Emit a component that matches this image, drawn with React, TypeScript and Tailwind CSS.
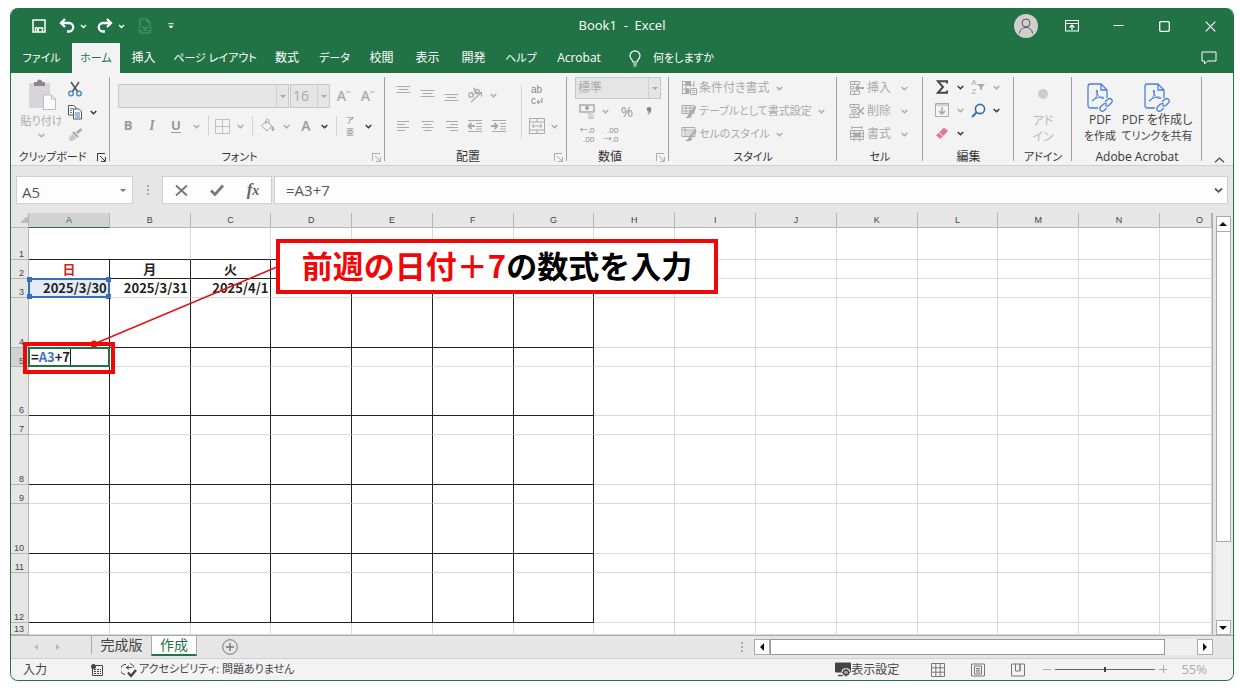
import { type ReactNode } from "react";

interface Tab {
  label: string;
  width: string;
}

const tabs: Tab[] = [
  { label: "ファイル", width: "w-[61px] text-[11px]" },
  { label: "ホーム", width: "w-12 text-[11px]" },
  { label: "挿入", width: "w-[47px]" },
  { label: "ページ レイアウト", width: "w-24 text-[11px]" },
  { label: "数式", width: "w-12" },
  { label: "データ", width: "w-[47px] text-[11px]" },
  { label: "校閲", width: "w-[47px]" },
  { label: "表示", width: "w-[45px]" },
  { label: "開発", width: "w-[47px]" },
  { label: "ヘルプ", width: "w-12 text-[11px]" },
  { label: "Acrobat", width: "w-[68px]" },
];

const columns = "ABCDEFGHIJKLMNO".split("");

const rows: { n: number; height: string }[] = [
  { n: 1, height: "h-8" },
  { n: 2, height: "h-[19px]" },
  { n: 3, height: "h-[19px]" },
  { n: 4, height: "h-[50px]" },
  { n: 5, height: "h-[19px]" },
  { n: 6, height: "h-[49px]" },
  { n: 7, height: "h-[19px]" },
  { n: 8, height: "h-[50px]" },
  { n: 9, height: "h-[19px]" },
  { n: 10, height: "h-[50px]" },
  { n: 11, height: "h-[19px]" },
  { n: 12, height: "h-[50px]" },
  { n: 13, height: "h-3" },
];

const values: Record<string, string> = {
  A2: "日",
  B2: "月",
  C2: "火",
  A3: "2025/3/30",
  B3: "2025/3/31",
  C3: "2025/4/1",
};

const Chevron = ({ dark = false }: { dark?: boolean }) => (
  <svg
    className={`h-[5px] w-[7px] shrink-0 ${dark ? "text-[#333]" : "text-[#aaa]"}`}
    viewBox="0 0 7 5"
    fill="none"
    stroke="currentColor"
    strokeWidth="1.4"
  >
    <path d="M.7 1l2.8 2.8L6.3 1" />
  </svg>
);

const Icon = ({
  size = "size-4",
  box = "0 0 16 16",
  children,
}: {
  size?: string;
  box?: string;
  children: ReactNode;
}) => (
  <svg className={`shrink-0 ${size}`} viewBox={box} fill="none" stroke="currentColor">
    {children}
  </svg>
);

// A ribbon button: fixed-width slot with its content centred
const Btn = ({
  label,
  className = "w-6",
  children,
}: {
  label: string;
  className?: string;
  children: ReactNode;
}) => (
  <button
    type="button"
    aria-label={label}
    className={`flex h-5 shrink-0 items-center justify-center ${className}`}
  >
    {children}
  </button>
);

const Divider = ({ className = "h-5" }: { className?: string }) => (
  <span className="flex w-2 shrink-0 justify-center">
    <span className={`w-px bg-[#d4d4d4] ${className}`} />
  </span>
);

const Group = ({
  title,
  width,
  launcher,
  children,
}: {
  title: string;
  width: string;
  launcher?: "dark" | "light";
  children: ReactNode;
}) => (
  <section
    aria-label={title}
    className={`relative flex shrink-0 flex-col after:absolute after:top-0 after:right-0 after:bottom-1 after:w-px after:bg-[#a0a0a0] ${width}`}
  >
    <div className="flex-1 pb-1">{children}</div>
    <div
      className={`flex h-4 items-center justify-center whitespace-nowrap text-[#333] ${
        launcher ? "pr-4" : ""
      } ${/^[ァ-ヶー]+$/.test(title) ? "text-[11px]" : ""}`}
    >
      {title}
    </div>
    {launcher && (
      <button
        type="button"
        aria-label={`${title}の設定`}
        className={`absolute right-1 bottom-[3px] ${
          launcher === "dark" ? "text-[#333]" : "text-[#aaa]"
        }`}
      >
        <Icon size="size-[9px]" box="0 0 9 9">
          <path d="M.5 8V.5H8M3 3l5 5M8.400 4v4.400H4" />
        </Icon>
      </button>
    )}
  </section>
);

const DropBox = ({
  label,
  value,
  className,
}: {
  label: string;
  value: string;
  className: string;
}) => (
  <div className={`relative flex border border-[#c6c6c6] bg-[#e5e5e5] ${className}`}>
    <select
      aria-label={label}
      disabled
      className="w-full appearance-none pl-0.5 text-[#aaa] opacity-100"
    >
      <option>{value}</option>
    </select>
    <span className="pointer-events-none flex w-3 shrink-0 items-center justify-center border-l border-[#cfcfcf]">
      <span className="border-x-[3px] border-t-[3px] border-x-transparent border-t-[#aaa]" />
    </span>
  </div>
);

const Lines = ({ rows: widths, start }: { rows: number[]; start?: boolean | "end" }) => (
  <Icon size="h-[10px] w-[15px]" box="0 0 15 10">
    {widths.map((w, i) => {
      const x = start === "end" ? 14 - w : start ? 1 : (15 - w) / 2;
      return <path key={i} d={`M${x} ${i * 3 + 0.5}h${w}`} />;
    })}
  </Icon>
);

const TitleBar = () => (
  <div className="grid h-[35px] grid-cols-[1fr_auto_1fr] items-center pt-px">
    <div className="flex items-center pl-5">
      <Btn label="上書き保存" className="w-4">
        <Icon size="size-[14px]" box="0 0 14 14">
          <path d="M1 1h12v12H1z" strokeWidth="1.500" />
          <path d="M3.500 13V9h7v4" strokeWidth="1.500" />
          <path d="M5 10h2v3H5z" fill="currentColor" stroke="none" />
        </Icon>
      </Btn>
      <Btn label="元に戻す" className="ml-2 w-6">
        <Icon size="size-4">
          <path d="M6 1L2 5l4 4M2 5h8a4 4 0 010 8.500H8" strokeWidth="2.300" />
        </Icon>
      </Btn>
      <Btn label="元に戻すの一覧" className="w-2">
        <Icon size="h-[5px] w-[7px]" box="0 0 7 5">
          <path d="M1 1l2.500 2.500L6 1" strokeWidth="1.300" />
        </Icon>
      </Btn>
      <Btn label="やり直し" className="ml-1.5 w-6">
        <Icon size="size-4">
          <path d="M10 1l4 4-4 4M14 5H6a4 4 0 000 8.500h2" strokeWidth="2.300" />
        </Icon>
      </Btn>
      <Btn label="やり直しの一覧" className="w-2">
        <Icon size="h-[5px] w-[7px]" box="0 0 7 5">
          <path d="M1 1l2.500 2.500L6 1" strokeWidth="1.300" />
        </Icon>
      </Btn>
      <Btn label="PDF" className="ml-2 w-6 text-[#4f9a6d]">
        <Icon size="size-4">
          <path d="M3 8V1h7l3 3v4M10 1v3h3M3 13v2h10v-2" />
          <path d="M2 9h12v3.500H2z" strokeDasharray="2 1" />
          <path d="M6 10.700h4" />
        </Icon>
      </Btn>
      <Btn label="クイック アクセスのカスタマイズ" className="ml-1 w-5">
        <Icon size="size-[6px]" box="0 0 6 6">
          <path d="M.5.700h5" />
          <path d="M.5 2.800h5L3 5.600z" fill="currentColor" stroke="none" />
        </Icon>
      </Btn>
    </div>
    <h1 className="text-[13px] whitespace-pre">{"Book1  -  Excel"}</h1>
    <div className="flex items-center justify-end gap-[22px] pr-[11px]">
      <button
        type="button"
        aria-label="アカウント"
        className="flex size-6 items-center justify-center rounded-full bg-[#d0cece] text-[#555]"
      >
        <Icon size="size-[18px]" box="0 0 18 18">
          <circle cx="9" cy="6" r="4" />
          <path d="M2.500 16.500c.5-8 12.500-8 13 0" />
        </Icon>
      </button>
      <Btn label="リボンの表示オプション">
        <Icon size="h-3 w-[14px]" box="0 0 14 12">
          <path d="M.5.500h13v10.500H.5zM.5 3.500h13M7 10V5.500M4.500 7.500L7 5l2.500 2.500" strokeWidth="1.200" />
        </Icon>
      </Btn>
      <Btn label="最小化">
        <Icon size="h-3 w-[11px]" box="0 0 11 12">
          <path d="M.5 5.500h10" />
        </Icon>
      </Btn>
      <Btn label="最大化">
        <Icon size="size-[11px]" box="0 0 11 11">
          <rect x=".7" y=".7" width="9.600" height="9.600" rx="1.200" strokeWidth="1.300" />
        </Icon>
      </Btn>
      <Btn label="閉じる">
        <Icon size="size-[11px]" box="0 0 11 11">
          <path d="M.7.700l9.600 9.600M10.300.700L.7 10.300" strokeWidth="1.200" />
        </Icon>
      </Btn>
    </div>
  </div>
);

const TabBar = () => (
  <nav className="flex h-[30px] items-stretch">
    {tabs.map(({ label, width }) => (
      <a
        key={label}
        href="#"
        aria-current={label === "ホーム" ? "page" : undefined}
        className={`flex items-center justify-center whitespace-nowrap ${width} ${
          label === "ホーム" ? "bg-[#f3f3f3] text-[#217346]" : ""
        }`}
      >
        {label}
      </a>
    ))}
    <button type="button" className="flex items-center gap-3 pl-4 text-[11px]">
      <Icon size="h-[17px] w-3" box="0 0 12 17">
        <path d="M4 12c0-2-3-3-3-6.200a5 5 0 0110 0C11 9 8 10 8 12zM4 14h4M4.500 16h3" strokeWidth="1.200" />
      </Icon>
      何をしますか
    </button>
    <button type="button" aria-label="コメント" className="mr-4 ml-auto">
      <Icon size="h-[14px] w-4" box="0 0 16 14">
        <path d="M1 1h14v9H6.500l-3 3v-3H1z" />
      </Icon>
    </button>
  </nav>
);

const AcrobatIcon = () => (
  <Icon size="h-[30px] w-[28px]" box="0 0 28 30">
    <g stroke="#4a80d8" strokeWidth="1.300">
      <path d="M12 26H4.500A2.500 2.500 0 012 23.500v-19A2.500 2.500 0 014.500 2H15l6 6v8M15 2v6h6" />
      <path d="M6.500 19c2-.5 5.500-6 5-10-.3-1.500-1.500-1-1.300 0 .5 4 4 7.500 7 7.500 1.500-.3.500-1.500-1-1.500-3 0-7 1.200-9.500 3-.8.800-.8 1.200-.2 1z" strokeWidth="1" />
      <path d="M19 20l2.500-2.500c3-2.500 6 .8 4 3.300l-2.500 2.500c-1.300 1.300-3 1-3.800 0M21 22.500c-1-1.300-3-1-4 0l-2.500 2.500c-2 2.500 1 5.500 3.700 3.500l2.500-2.500" />
    </g>
  </Icon>
);

const styleItems: { label: string; text?: string; icon: ReactNode }[] = [
  {
    label: "条件付き書式",
    icon: (
      <Icon>
        <path d="M1.500 1v13M1 1.500h9M5 1v12M1 5h12M1 9h7M9.500 1v6M13 1v6M1 13.500h7" />
        <path d="M5 1.500h4V5H5zM5 9h3v4H5z" fill="currentColor" />
        <path d="M9.500 8.500h6v6h-6zM11 10.500h3M11 12.500h3" />
      </Icon>
    ),
  },
  {
    label: "テーブルとして書式設定",
    text: "text-[11px]",
    icon: (
      <Icon>
        <path d="M1 2.500h12v8H1zM1 5h12M1 8h10M5 2.500v8M9 2.500v8" />
        <path d="M15 3.500L8 10.500M14.500 5L9.500 12" strokeWidth="1.500" />
        <path d="M5 14.500c2.500 0 2-3.500 4-3.500l1.300 1.500c0 2-3 2.800-5.300 2z" fill="currentColor" />
      </Icon>
    ),
  },
  {
    label: "セルのスタイル",
    text: "text-[11px]",
    icon: (
      <Icon>
        <path d="M1 1.500h13v9H1zM1 4h13M4 1.500v9" />
        <path d="M5 5h8v5H5z" fill="#ddd6dd" stroke="none" />
        <path d="M15 4.500L9 11" strokeWidth="2" />
        <path d="M5 14.500c3 0 2-3.500 4.500-3.500l1.300 1.500c0 2-3.500 2.800-5.800 2z" fill="currentColor" />
      </Icon>
    ),
  },
];

const cellItems: { label: string; icon: ReactNode }[] = [
  {
    label: "挿入",
    icon: (
      <Icon>
        <path d="M1.500 1.500h9v3h-9zM5.500 1.500v3M1.500 11h9v3.500h-9zM5.500 11v3.500" />
        <path d="M7 8h8M9.500 5.500L7 8l2.500 2.500" strokeWidth="1.800" />
        <path d="M1.500 6.500h3V9h-3z" />
      </Icon>
    ),
  },
  {
    label: "削除",
    icon: (
      <Icon>
        <path d="M1 1.500h9v3H1zM5 1.500v3M1 11h9v3.500H1zM5 11v3.500M3 6.500h4V9H3z" />
        <path d="M8 4.500l7 7M15 4.500l-7 7" strokeWidth="1.600" />
      </Icon>
    ),
  },
  {
    label: "書式",
    icon: (
      <Icon>
        <path d="M3 1.500h10M3 0v3M13 0v3M1.500 4.500h13v9h-13zM1.500 7.500h13M1.500 10.500h13M5 4.500v11M11 4.500v11" />
        <path d="M5 7h6v4H5z" fill="currentColor" />
      </Icon>
    ),
  },
];

const Ribbon = () => (
  <div className="flex items-stretch border-b border-[#cfcfcf] bg-[#f3f3f3] pt-1 text-[#aaa]">
    <Group title="クリップボード" width="w-[99px]" launcher="dark">
      <div className="flex pt-0.5 pl-2">
        <button type="button" className="flex w-[45px] flex-col items-center">
          <Icon size="h-8 w-[30px]" box="0 0 30 32">
            <path d="M2 4h21v25H2z" fill="#d8d4d8" stroke="none" />
            <path d="M7 3h3a2.500 2.500 0 015 0h3v4H7z" fill="#888" stroke="none" />
            <path d="M16.500 16h8l4 4v10.500h-12z" fill="#fafafa" stroke="#bbb" />
            <path d="M24.500 16v4h4" stroke="#bbb" />
          </Icon>
          <span className="text-[11px] leading-5 whitespace-nowrap">貼り付け</span>
          <span className="py-0.5">
            <Chevron />
          </span>
        </button>
        <div className="flex flex-col gap-[3px] pl-1">
          <Btn label="切り取り" className="w-3.5">
            <Icon>
              <path d="M4 1l6.500 9.500M12 1L5.500 10.500" stroke="#555" strokeWidth="1.600" />
              <circle cx="4" cy="12.500" r="2.300" stroke="#3f7fbf" strokeWidth="1.300" />
              <circle cx="12" cy="12.500" r="2.300" stroke="#3f7fbf" strokeWidth="1.300" />
            </Icon>
          </Btn>
          <span className="flex items-center gap-2">
            <Btn label="コピー" className="w-3.5">
              <Icon>
                <path d="M1.500 1.500h5l2.500 2V11H1.500z" stroke="#555" fill="#fff" />
                <path d="M6.500 5h5l3 2.500V15h-8z" stroke="#555" fill="#fff" />
                <path d="M3 4.500h3M3 6.500h2M3 8.500h2M8 9h5M8 11h5M8 13h5" stroke="#3f7fbf" />
              </Icon>
            </Btn>
            <Chevron dark />
          </span>
          <Btn label="書式のコピー/貼り付け" className="w-3.5">
            <Icon>
              <path d="M14.500 2L10 6" strokeWidth="2.600" />
              <path d="M6 5l5 5" strokeWidth="2.400" />
              <path d="M5.500 7l4 4c-2 2-4 3-6 3.500L1.500 11z" fill="#ccc6cc" stroke="none" />
            </Icon>
          </Btn>
        </div>
      </div>
    </Group>

    <Group title="フォント" width="w-[275px]" launcher="light">
      <div className="flex items-center pt-[7px] pl-2">
        <DropBox label="フォント" value="" className="h-6 w-[171px]" />
        <DropBox label="フォント サイズ" value="16" className="ml-px h-6 w-10 text-sm" />
        <Btn label="フォント サイズの拡大" className="ml-0.5 w-6">
          <span className="text-sm font-semibold">A</span>
          <Icon size="mb-2 h-1 w-[5px]" box="0 0 5 4">
            <path d="M.5 3l2-2 2 2" />
          </Icon>
        </Btn>
        <Btn label="フォント サイズの縮小">
          <span className="text-sm font-semibold">A</span>
          <Icon size="mb-2 h-1 w-[5px]" box="0 0 5 4">
            <path d="M.5 1l2 2 2-2" />
          </Icon>
        </Btn>
      </div>
      <div className="flex items-center pt-2 pl-1.5">
        <Btn label="太字">
          <b className="text-[13px] text-[#999]">B</b>
        </Btn>
        <Btn label="斜体">
          <i className="font-['Liberation_Serif',serif] text-sm font-bold text-[#999]">I</i>
        </Btn>
        <Btn label="下線">
          <b className="text-[13px] text-[#999] underline underline-offset-2">U</b>
        </Btn>
        <Btn label="下線の種類" className="w-4">
          <Chevron />
        </Btn>
        <Divider />
        <Btn label="罫線" className="w-5">
          <Icon size="size-[15px]" box="0 0 15 15">
            <path d="M.5.500h14v14H.5zM7.500 0v15M0 7.500h15" stroke="#c4bcc4" />
          </Icon>
        </Btn>
        <Btn label="罫線の種類" className="w-4">
          <Chevron />
        </Btn>
        <Divider />
        <Btn label="塗りつぶしの色">
          <Icon>
            <path d="M6 3l6 5-5 5-5.500-5zM6 6V2.500c0-2 3-2 3 0V5" />
            <path d="M12.500 8.500c2 2.500 2 4 .5 4s-1.500-1.500-.5-4z" fill="currentColor" />
          </Icon>
        </Btn>
        <Btn label="塗りつぶしの色の一覧" className="w-3">
          <Chevron />
        </Btn>
        <Btn label="フォントの色" className="w-7">
          <span className="text-sm font-semibold text-[#999]">A</span>
        </Btn>
        <Btn label="フォントの色の一覧" className="mr-1 w-2">
          <Chevron dark />
        </Btn>
        <Divider />
        <Btn label="ふりがな" className="w-5">
          <span className="flex flex-col items-center text-[8px] leading-3 text-[#888]">
            <span>ア</span>
            <span>亜</span>
          </span>
        </Btn>
        <Btn label="ふりがなの設定" className="w-4">
          <Chevron dark />
        </Btn>
      </div>
    </Group>

    <Group title="配置" width="w-[182px]" launcher="light">
      <div className="flex pt-2 pl-1.5">
        <div className="flex w-[126px] flex-col gap-[11px]">
          <div className="flex items-center">
            <Btn label="上揃え" className="w-6 pb-2">
              <Lines rows={[14, 10, 14]} />
            </Btn>
            <Btn label="上下中央揃え">
              <Lines rows={[14, 10, 14]} />
            </Btn>
            <Btn label="下揃え" className="w-6 pt-2">
              <Lines rows={[14, 10, 14]} />
            </Btn>
            <Btn label="方向">
              <Icon>
                <path d="M4 15L14 6M10.500 5.500L14.500 5.500V9.500" strokeWidth="1.200" />
                <circle cx="4" cy="8" r="2.200" strokeWidth="1.300" />
                <path d="M4.500 5.200l2.300 3.600M6.500 1l4.300 6" strokeWidth="1.300" />
                <circle cx="10" cy="4.500" r="2.200" strokeWidth="1.300" />
              </Icon>
            </Btn>
            <Btn label="方向の一覧" className="w-3">
              <Chevron />
            </Btn>
          </div>
          <div className="flex items-center">
            <Btn label="左揃え">
              <Lines rows={[12, 8, 12, 8]} start />
            </Btn>
            <Btn label="中央揃え">
              <Lines rows={[12, 8, 12, 8]} />
            </Btn>
            <Btn label="右揃え">
              <Lines rows={[12, 8, 12, 8]} start="end" />
            </Btn>
            <Btn label="インデントを減らす">
              <Icon>
                <path d="M1 2.500h14M9 5.500h6M9 8.500h6M9 11h6M1 13.500h14" />
                <path d="M8 8H2M4.500 5L1.500 8l3 3" strokeWidth="1.800" />
              </Icon>
            </Btn>
            <Btn label="インデントを増やす">
              <Icon>
                <path d="M1 2.500h14M9 5.500h6M9 8.500h6M9 11h6M1 13.500h14" />
                <path d="M0 8h6M3.500 5l3 3-3 3" strokeWidth="1.800" />
              </Icon>
            </Btn>
          </div>
        </div>
        <Divider className="h-[54px]" />
        <div className="flex flex-col gap-[11px]">
          <Btn label="折り返して全体を表示する">
            <span className="flex flex-col items-start font-['Liberation_Sans',sans-serif] text-[10px] leading-[11px] text-[#888]">
              <span>ab</span>
              <span className="flex items-center">
                c
                <Icon size="h-2 w-[7px]" box="0 0 7 8">
                  <path d="M6 1v4H1M3 3L1 5l2 2" />
                </Icon>
              </span>
            </span>
          </Btn>
          <span className="flex items-center gap-0.5">
            <Btn label="セルを結合して中央揃え">
              <Icon>
                <path d="M.5.500h15v15H.5zM.5 4h15M.5 12h15M8 .5V4M8 12v3.500M3 8h10M5 6L3 8l2 2M11 6l2 2-2 2" />
              </Icon>
            </Btn>
            <Chevron />
          </span>
        </div>
      </div>
    </Group>

    <Group title="数値" width="w-[102px]" launcher="light">
      <div className="pl-2">
        <DropBox label="表示形式" value="標準" className="h-[22px] w-[86px]" />
        <div className="flex items-center pt-0.5">
          <Btn label="通貨表示形式">
            <Icon>
              <path d="M1 2h14v7H1z" strokeWidth="1.500" />
              <circle cx="8" cy="5" r="1.700" fill="currentColor" />
              <path d="M7 10h6M9 12.500h6M9 15h6" stroke="#ccc" strokeWidth="2" />
            </Icon>
          </Btn>
          <Btn label="通貨の一覧" className="w-3">
            <Chevron />
          </Btn>
          <Btn label="パーセント スタイル" className="w-8">
            <span className="text-[15px] text-[#999]">%</span>
          </Btn>
          <Btn label="桁区切りスタイル" className="w-3">
            <Icon size="h-2 w-[6px]" box="0 0 6 8">
              <path d="M3 0a2.300 2.300 0 012.300 2.500C5.300 5 4 7 1.500 7.800V6.700C2.600 6.200 3 5.500 3 4.700A2.300 2.300 0 013 0z" fill="#888" stroke="none" />
            </Icon>
          </Btn>
        </div>
        <div className="flex items-center pt-[3px]">
          <Btn label="小数点以下の表示桁数を増やす">
            <span className="flex flex-col items-end text-[8px] leading-[9px] text-[#888]">
              <span>←.0</span>
              <span>.00</span>
            </span>
          </Btn>
          <Btn label="小数点以下の表示桁数を減らす">
            <span className="flex flex-col items-end text-[8px] leading-[9px] text-[#888]">
              <span>.00</span>
              <span>→.0</span>
            </span>
          </Btn>
        </div>
      </div>
    </Group>

    <Group title="スタイル" width="w-[168px]">
      <div className="flex flex-col gap-[3px] pt-px pl-3">
        {styleItems.map(({ label, text = "", icon }) => (
          <button
            key={label}
            type="button"
            className={`flex h-5 items-center gap-0.5 whitespace-nowrap ${text}`}
          >
            {icon}
            <span className="pr-1">{label}</span>
            <Chevron />
          </button>
        ))}
      </div>
    </Group>

    <Group title="セル" width="w-[86px]">
      <div className="flex flex-col gap-[3px] pt-px pl-3">
        {cellItems.map(({ label, icon }) => (
          <button key={label} type="button" className="flex h-5 items-center gap-0.5 whitespace-nowrap">
            {icon}
            <span className="pr-2">{label}</span>
            <Chevron />
          </button>
        ))}
      </div>
    </Group>

    <Group title="編集" width="w-[91px]">
      <div className="flex flex-col gap-[3px] pl-[7px]">
        <div className="flex items-center">
          <Btn label="合計">
            <Icon size="h-[14px] w-3" box="0 0 12 14">
              <path d="M11 3.500V1.200H1.800L7 7l-5.200 5.800H11v-2.300" stroke="#444" strokeWidth="1.900" />
            </Icon>
          </Btn>
          <Btn label="合計の一覧" className="w-3">
            <Chevron dark />
          </Btn>
          <Btn label="並べ替えとフィルター" className="w-6">
            <span className="flex flex-col font-['Liberation_Sans',sans-serif] text-[8px] leading-[9px]">
              <span>A</span>
              <span>Z</span>
            </span>
            <Icon size="size-2" box="0 0 8 8">
              <path d="M0 1h8L5 4v3.500L3 6V4z" fill="currentColor" stroke="none" />
            </Icon>
          </Btn>
          <Btn label="並べ替えの一覧" className="w-3">
            <Chevron />
          </Btn>
        </div>
        <div className="flex items-center">
          <Btn label="フィル">
            <Icon size="size-[14px]" box="0 0 14 14">
              <path d="M.5.500h13v13H.5zM.5 2h13" />
              <path d="M7 4v7M4 8l3 3 3-3" strokeWidth="1.600" />
            </Icon>
          </Btn>
          <Btn label="フィルの一覧" className="w-3">
            <Chevron />
          </Btn>
          <Btn label="検索と選択" className="w-6">
            <Icon size="size-[15px]" box="0 0 15 15">
              <g stroke="#2f6fae">
                <circle cx="9" cy="6" r="4.600" strokeWidth="1.600" />
                <path d="M5.500 9.500L1 14" strokeWidth="2" />
              </g>
            </Icon>
          </Btn>
          <Btn label="検索の一覧" className="w-3">
            <Chevron dark />
          </Btn>
        </div>
        <div className="flex items-center">
          <Btn label="クリア">
            <Icon size="size-[14px]" box="0 0 14 14">
              <path d="M9 1.500l4 3.500-7.500 8L1 9.500z" fill="#e17a8f" stroke="none" />
              <path d="M4 6.500L8.300 10.400" stroke="#f3f3f3" />
            </Icon>
          </Btn>
          <Btn label="クリアの一覧" className="w-3">
            <Chevron dark />
          </Btn>
        </div>
      </div>
    </Group>

    <Group title="アドイン" width="w-[58px]">
      <button type="button" className="flex w-full flex-col items-center pt-3 leading-4 text-[#bbb]">
        <span className="mb-3.5 size-[10px] rounded-full bg-[#ccc]" />
        <span>アド</span>
        <span>イン</span>
      </button>
    </Group>

    <Group title="Adobe Acrobat" width="w-[130px]">
      <div className="flex pt-[5px] pl-2 text-[#444]">
        <button type="button" className="flex w-10 flex-col items-center leading-4 whitespace-nowrap">
          <AcrobatIcon />
          <span>PDF</span>
          <span className="text-[11px]">を作成</span>
        </button>
        <button type="button" className="flex w-[74px] flex-col items-center leading-4 whitespace-nowrap">
          <AcrobatIcon />
          <span>PDF を作成し</span>
          <span className="text-[11px]">てリンクを共有</span>
        </button>
      </div>
    </Group>

    <button type="button" aria-label="リボンを折りたたむ" className="mr-2 mb-0.5 ml-auto self-end text-[#444]">
      <Icon size="h-[6px] w-[11px]" box="0 0 11 6">
        <path d="M1 5.200L5.500 1 10 5.200" strokeWidth="1.200" />
      </Icon>
    </button>
  </div>
);

const FormulaBar = () => (
  <div className="flex h-[47px] items-start pt-[10px] pr-[5px] pl-[5px] text-[15px] text-[#555]">
    <div className="flex h-7 w-[117px] items-center border border-[#d0d0d0] bg-[#fdfdfd]">
      <input
        aria-label="名前ボックス"
        defaultValue="A5"
        className="w-full min-w-0 pt-1 pl-[5px] outline-none"
      />
      <span className="mr-1.5 shrink-0 border-x-[3px] border-t-[3px] border-x-transparent border-t-[#777]" />
    </div>
    <span className="flex h-7 w-[29px] flex-col items-center justify-center gap-0.5">
      <span className="size-0.5 bg-[#aaa]" />
      <span className="size-0.5 bg-[#aaa]" />
      <span className="size-0.5 bg-[#aaa]" />
    </span>
    <div className="flex h-7 w-[110px] items-center justify-around border border-[#d0d0d0] bg-[#fdfdfd]">
      <Btn label="キャンセル">
        <Icon size="size-[13px]" box="0 0 13 13">
          <path d="M1 1.500l11 10M12 1.500l-11 10" stroke="#777" strokeWidth="1.800" />
        </Icon>
      </Btn>
      <Btn label="入力を確定">
        <Icon size="h-3 w-[14px]" box="0 0 14 12">
          <path d="M1 6.500L5 10.500 13 1.500" stroke="#777" strokeWidth="2.800" />
        </Icon>
      </Btn>
      <Btn label="関数の挿入">
        <i className="font-['Liberation_Serif',serif] text-[17px] leading-5 font-bold text-[#666]">
          f<span className="text-sm">x</span>
        </i>
      </Btn>
    </div>
    <div className="ml-0.5 flex h-7 flex-1 items-center border border-[#d0d0d0] bg-[#fdfdfd]">
      <input
        aria-label="数式バー"
        defaultValue="=A3+7"
        className="w-full min-w-0 pl-[11px] outline-none"
      />
      <button type="button" aria-label="数式バーの展開" className="mr-1">
        <Icon size="h-[5px] w-[9px]" box="0 0 9 5">
          <path d="M1 .5l3.500 3.300L8 .5" strokeWidth="1.800" />
        </Icon>
      </button>
    </div>
  </div>
);

const cellClass = (col: number, row: number) => {
  const inTable = col < 7;
  const right =
    inTable && row > 1 && row < 13 ? "border-r-[#222]" : "border-r-[#d9d9d9]";
  const bottom =
    inTable && row < 13 && (row === 1 || row % 2 === 0)
      ? "border-b-[#222]"
      : "border-b-[#d9d9d9]";
  return `${right} ${bottom}`;
};

const CellContent = ({ id }: { id: string }) => {
  if (id === "A3") {
    return (
      <>
        {values[id]}
        <span className="absolute -inset-px border-2 border-[#3a6cbd]">
          <span className="absolute -top-[3px] -left-[3px] size-[5px] bg-[#3a6cbd]" />
          <span className="absolute -top-[3px] -right-[3px] size-[5px] bg-[#3a6cbd]" />
          <span className="absolute -bottom-[3px] -left-[3px] size-[5px] bg-[#3a6cbd]" />
          <span className="absolute -right-[3px] -bottom-[3px] size-[5px] bg-[#3a6cbd]" />
        </span>
      </>
    );
  }
  if (id === "A5") {
    return (
      <>
        <span className="inline-block border-r border-[#222] leading-4">
          =<span className="text-[#4674c4]">A3</span>+7
        </span>
        <span className="absolute -inset-px border-2 border-[#217346]" />
      </>
    );
  }
  return <>{values[id]}</>;
};

const Sheet = () => (
  <div className="relative flex-1">
    <table className="w-full table-fixed border-separate border-spacing-0 border-r border-[#aaa] bg-white">
      <colgroup>
        <col className="w-[18px]" />
        {columns.map((c) => (
          <col key={c} className={c === "O" ? "w-[52px]" : ""} />
        ))}
      </colgroup>
      <thead className="font-['Liberation_Sans',sans-serif]">
        <tr className="h-[15px] bg-[#e6e6e6] text-[9px] leading-3 text-[#444]">
          <th className="border-r border-b border-[#b5b5b5] p-0">
            <span className="ml-auto block w-2 border-b-[6px] border-l-[6px] border-b-[#bbb] border-l-transparent" />
          </th>
          {columns.map((c) => (
            <th
              key={c}
              scope="col"
              className={`border-r border-b p-0 font-normal ${
                c === "A"
                  ? "border-r-[#b5b5b5] border-b-[#217346] bg-[#d2d2d2] text-[#217346]"
                  : "border-[#b5b5b5]"
              } ${c === "O" ? "pr-2 text-right" : "text-center"}`}
            >
              {c}
            </th>
          ))}
        </tr>
      </thead>
      <tbody>
        {rows.map(({ n, height }) => (
          <tr key={n} className={height}>
            <th
              scope="row"
              className={`border-r border-b border-[#b5b5b5] p-0 pr-1 text-right align-bottom font-['Liberation_Sans',sans-serif] text-[9px] leading-[10px] font-normal ${
                n === 5 ? "bg-[#d2d2d2] text-[#217346]" : "bg-[#e6e6e6] text-[#444]"
              }`}
            >
              {n}
            </th>
            {columns.map((c, i) => {
              // A1:B1 is one merged cell
              if (n === 1 && i === 1) return null;
              const id = c + n;
              return (
                <td
                  key={c}
                  colSpan={id === "A1" ? 2 : 1}
                  className={`relative border-r border-b p-0 font-['Noto_Sans_CJK_JP',sans-serif] text-[13px] leading-4 font-bold ${cellClass(i, n)} ${
                    n === 2 ? "text-center" : n === 5 ? "pl-0.5 text-left" : "pr-0.5 text-right"
                  } ${id === "A2" ? "text-[#e02020]" : "text-[#222]"} ${
                    id === "A3" ? "bg-[#e3ebf7]" : ""
                  }`}
                >
                  <CellContent id={id} />
                </td>
              );
            })}
          </tr>
        ))}
      </tbody>
    </table>

    {/* Annotation drawn over the sheet */}
    <svg className="pointer-events-none absolute inset-0 size-full" fill="none">
      <path d="M266 54L83 131" stroke="#e01414" strokeWidth="1.500" />
      <circle cx="83" cy="131" r="3.500" fill="#e01414" />
    </svg>
    <div className="absolute top-[129px] left-3 h-8 w-[92px] border-4 border-[#f00808]" />
    <p className="absolute top-[26px] left-[265px] flex h-[55px] w-[442px] items-center justify-center border-4 border-[#f00808] bg-white pb-1 font-['Noto_Sans_CJK_JP',sans-serif] text-[31px] leading-none font-bold whitespace-nowrap text-black [font-feature-settings:normal]">
      <span className="text-[#f00808]">前週の日付＋7</span>の数式を入力
    </p>
  </div>
);

const Triangle = ({ d }: { d: string }) => (
  <Icon size="size-2" box="0 0 8 8">
    <path d={d} fill="#111" stroke="none" />
  </Icon>
);

const VerticalScroll = () => (
  <div className="flex w-5 shrink-0 flex-col items-center bg-[#e6e6e6] pt-[3px]">
    <button
      type="button"
      aria-label="上へスクロール"
      className="flex h-4 w-[15px] items-center justify-center border border-[#aaa] bg-white"
    >
      <Triangle d="M0 6l4-4 4 4z" />
    </button>
    <div className="flex w-[15px] flex-1 flex-col bg-[#f0f0f0]">
      <div className="h-4/5 border border-t-0 border-[#aaa] bg-white" />
    </div>
    <button
      type="button"
      aria-label="下へスクロール"
      className="flex h-[15px] w-[15px] items-center justify-center border border-[#aaa] bg-white"
    >
      <Triangle d="M0 2l4 4 4-4z" />
    </button>
  </div>
);

const SheetTabs = () => (
  <div className="flex h-[23px] items-start border-t border-[#aaa] bg-[#e6e6e6] text-sm text-[#444]">
    <div className="flex h-full w-20 items-center gap-[18px] pl-[23px]">
      <span className="border-y-[3px] border-r-4 border-y-transparent border-r-[#bbb]" />
      <span className="border-y-[3px] border-l-4 border-y-transparent border-l-[#bbb]" />
    </div>
    <button type="button" className="flex h-[18px] w-[60px] items-center justify-center border-l border-[#aaa]">
      完成版
    </button>
    <button
      type="button"
      className="flex h-5 w-[46px] items-center justify-center border-x border-b-2 border-x-[#aaa] border-b-[#217346] bg-white text-[#217346]"
    >
      作成
    </button>
    <button type="button" aria-label="新しいシート" className="mt-[3px] ml-[25px] text-[#777]">
      <Icon>
        <circle cx="8" cy="8" r="7.300" />
        <path d="M8 4v8M4 8h8" strokeWidth="1.400" />
      </Icon>
    </button>
    <div className="mr-5 ml-auto flex h-full w-[473px] items-center">
      <span className="mr-[11px] ml-px flex flex-col gap-0.5">
        <span className="size-0.5 bg-[#aaa]" />
        <span className="size-0.5 bg-[#aaa]" />
        <span className="size-0.5 bg-[#aaa]" />
      </span>
      <button
        type="button"
        aria-label="左へスクロール"
        className="flex h-4 w-4 items-center justify-center border border-[#aaa] bg-white"
      >
        <Triangle d="M6 0L2 4l4 4z" />
      </button>
      <div className="flex h-4 flex-1 bg-[#f0f0f0] pr-8">
        <div className="flex-1 border border-[#999] bg-white" />
      </div>
      <button
        type="button"
        aria-label="右へスクロール"
        className="flex h-4 w-4 items-center justify-center border border-[#aaa] bg-white"
      >
        <Triangle d="M2 0l4 4-4 4z" />
      </button>
    </div>
  </div>
);

const StatusBar = () => (
  <footer className="flex h-[22px] items-center border-t border-[#d0d0d0] bg-[#f3f3f3] pr-[26px] pl-3 text-[#444]">
    <span className="w-[68px]">入力</span>
    <button type="button" aria-label="マクロの記録">
      <Icon size="size-3" box="0 0 12 12">
        <path d="M1.500 3v8.500h10V1.500H5" />
        <path d="M3 5.500h7M3 7.500h7M3 9.500h7" strokeDasharray="2 1" />
        <circle cx="2.500" cy="2.500" r="2.500" fill="currentColor" stroke="none" />
      </Icon>
    </button>
    <button type="button" className="ml-[18px] flex items-center gap-0.5 text-[11px] whitespace-nowrap">
      <Icon size="size-4">
        <path d="M5 2.500a5 5 0 00-1 10M9 1.500a6 6 0 014 4M5 5.500h6M8 3.500L5.500 5.500 8 7.500" />
        <path d="M7 10.500l3 3.500 5-6" strokeWidth="2.400" />
      </Icon>
      アクセシビリティ: 問題ありません
    </button>
    <button type="button" className="ml-auto flex items-center">
      <Icon size="h-[15px] w-4" box="0 0 16 15">
        <path d="M.5 1h15v9H.5z" fill="currentColor" />
        <path d="M3 13.500h5" strokeWidth="1.400" />
        <circle cx="11" cy="10.500" r="4.500" fill="#f3f3f3" stroke="none" />
        <circle cx="11" cy="10.500" r="2.500" strokeWidth="1.600" />
        <path d="M11 6.500v8M7 10.500h2M13 10.500h2" />
      </Icon>
      表示設定
    </button>
    <div className="ml-8 flex gap-[26px] text-[#777]">
      <button type="button" aria-label="標準">
        <Icon size="size-[14px]" box="0 0 14 14">
          <path d="M.5.500h13v13H.5zM.5 4.800h13M.5 9.200h13M4.800.500v13M9.200.500v13" />
        </Icon>
      </button>
      <button type="button" aria-label="ページ レイアウト">
        <Icon size="size-[14px]" box="0 0 14 14">
          <path d="M.5 1h13v12H.5zM3.500 3h7v8h-7zM5 5.500h4M5 7.200h4M5 9h4" />
        </Icon>
      </button>
      <button type="button" aria-label="改ページ プレビュー">
        <Icon size="size-[14px]" box="0 0 14 14">
          <path d="M.5 1h13v12H.5zM4.500 1v7h4.500V1M9 8V1" />
        </Icon>
      </button>
    </div>
    <div className="ml-[18px] flex items-center gap-1 text-[#aaa]">
      <button type="button" aria-label="縮小">
        <Icon size="size-2" box="0 0 8 8">
          <path d="M0 4.500h8" />
        </Icon>
      </button>
      <input
        type="range"
        aria-label="ズーム"
        defaultValue={50}
        className="h-px w-[100px] appearance-none bg-[#666] [&::-webkit-slider-thumb]:h-[5px] [&::-webkit-slider-thumb]:w-0.5 [&::-webkit-slider-thumb]:appearance-none [&::-webkit-slider-thumb]:bg-[#444]"
      />
      <button type="button" aria-label="拡大">
        <Icon size="size-2" box="0 0 8 8">
          <path d="M0 4.500h8M4.500 0v8" />
        </Icon>
      </button>
      <span className="pl-2.5 text-[13px]">55%</span>
    </div>
  </footer>
);

export default function App() {
  return (
    <div className="min-h-screen bg-white py-2 pr-1.5 pl-2.5 font-['Open_Sans','Noto_Sans_CJK_JP',sans-serif] text-xs [font-feature-settings:'palt']">
      <main className="overflow-hidden rounded-lg border-x border-b border-[#217346] bg-[#e6e6e6]">
        <header className="bg-[#217346] text-white">
          <TitleBar />
          <TabBar />
        </header>
        <Ribbon />
        <FormulaBar />
        <div className="flex">
          <Sheet />
          <VerticalScroll />
        </div>
        <SheetTabs />
        <StatusBar />
      </main>
    </div>
  );
}
